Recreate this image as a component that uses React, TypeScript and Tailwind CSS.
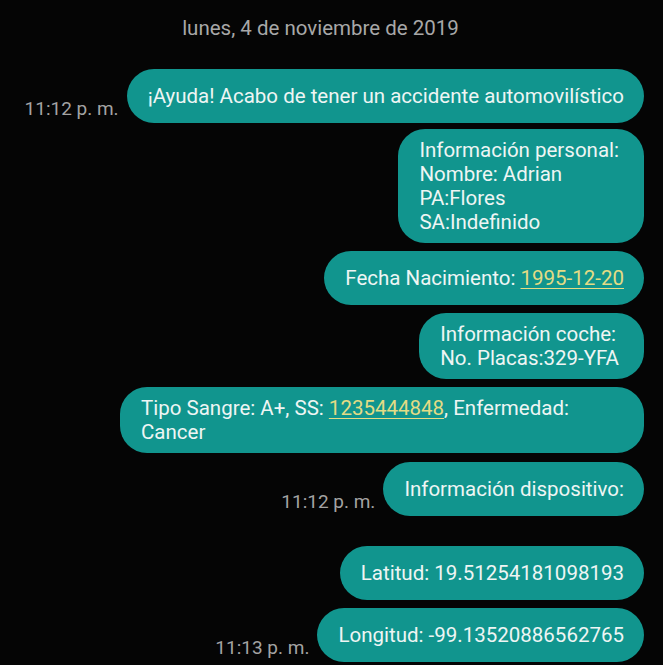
const Link = ({ children }: { children: React.ReactNode }) => (
  <span className="text-[#e4dc84] underline decoration-1 underline-offset-[3px]">{children}</span>
);

interface Msg {
  time?: string;
  lines: React.ReactNode[];
  gap?: string;
  width?: string;
}

const messages: Msg[] = [
  { time: '11:12 p. m.', lines: ['¡Ayuda! Acabo de tener un accidente automovilístico'], gap: 'mt-0' },
  {
    lines: ['Información personal:', 'Nombre: Adrian', 'PA:Flores', 'SA:Indefinido'],
    gap: 'mt-[6px]',
  },
  {
    lines: [
      <>
        Fecha Nacimiento: <Link>1995-12-20</Link>
      </>,
    ],
  },
  { lines: ['Información coche:', 'No. Placas:329-YFA'] },
  {
    lines: [
      <>
        Tipo Sangre: A+, SS: <Link>1235444848</Link>, Enfermedad:
      </>,
      'Cancer',
    ],
    width: 'w-[524px]',
  },
  { time: '11:12 p. m.', lines: ['Información dispositivo:'], gap: 'mt-[9px]' },
  { lines: ['Latitud: 19.51254181098193'], gap: 'mt-[30px]' },
  { time: '11:13 p. m.', lines: ['Longitud: -99.13520886562765'] },
];

const Bubble = ({ msg }: { msg: Msg }) => {
  const multi = msg.lines.length > 1;
  return (
    <div className={`flex items-end gap-[8px] ${msg.gap ?? 'mt-[8px]'}`}>
      {msg.time && (
        <span className="pb-[3px] text-[19px] leading-[22px] text-[#a3a3a3] whitespace-nowrap">
          {msg.time}
        </span>
      )}
      <div
        className={`rounded-[27px] bg-[#11958e] pl-[21px] text-[20.5px] leading-[24px] text-[#eef5f4] ${
          multi ? 'py-[9px] pr-[25px]' : 'py-[15px] pr-[20px]'
        } ${msg.width ?? ''}`}
      >
        {msg.lines.map((line, i) => (
          <div key={i} className="whitespace-nowrap">
            {line}
          </div>
        ))}
      </div>
    </div>
  );
};

const App = () => {
  return (
    <div
      className="h-[665px] w-[663px] overflow-hidden bg-[#050505]"
      style={{ fontFamily: 'Roboto, "Liberation Sans", sans-serif' }}
    >
      <div className="pt-[16px] pr-[22px] text-center text-[20.5px] leading-[24px] text-[#a8a8a8]">
        lunes, 4 de noviembre de 2019
      </div>
      <div className="mt-[29px] flex flex-col items-end pr-[19px]">
        {messages.map((m, i) => (
          <Bubble key={i} msg={m} />
        ))}
      </div>
    </div>
  );
};

export default App;
